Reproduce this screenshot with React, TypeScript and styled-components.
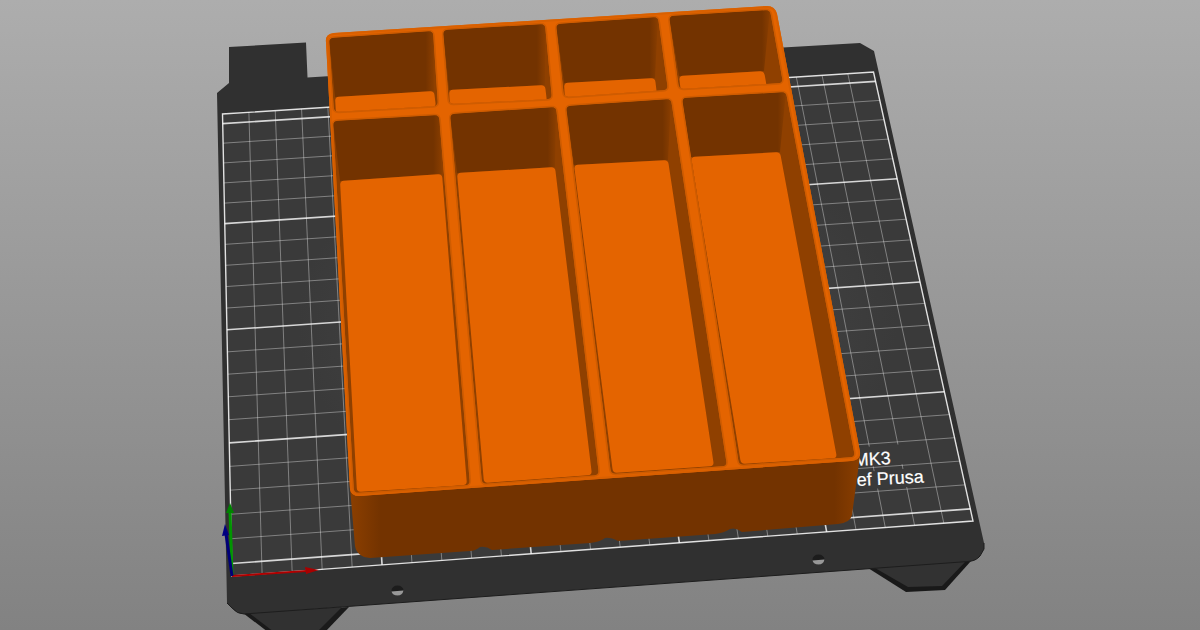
import React from 'react';
import styled, { createGlobalStyle } from 'styled-components';

const GlobalStyle = createGlobalStyle`
  body {
    margin: 0;
    background: #979797;
  }
`;

const Viewport = styled.main`
  width: 100%;
  height: 100vh;
  overflow: hidden;
  background: linear-gradient(180deg, #adadad 0%, #828282 100%);
`;

const Scene = styled.svg`
  display: block;
  width: 100%;
  height: 100%;
`;

const GridLine = styled.line<{ $major?: boolean }>`
  stroke: #ffffff;
  stroke-width: ${({ $major }) => ($major ? 1.6 : 1)};
  stroke-opacity: ${({ $major }) => ($major ? 0.8 : 0.36)};
`;

const BedLabel = styled.text`
  font-family: 'Liberation Sans', Arial, sans-serif;
  font-size: 18px;
  fill: #ffffff;
  stroke: #ffffff;
  stroke-width: 0.2px;
`;

type Point = [number, number];

const pts = (list: Point[]) => list.map((p) => p.join(',')).join(' ');

/* Path of a closed polygon whose corners are rounded by the given radius. */
const rounded = (list: Point[], radius: number) => {
  const n = list.length;
  const toward = (a: Point, b: Point): Point => {
    const d = Math.hypot(b[0] - a[0], b[1] - a[1]);
    const t = Math.min(radius / d, 0.5);
    return [a[0] + (b[0] - a[0]) * t, a[1] + (b[1] - a[1]) * t];
  };
  return (
    list
      .map((p, i) => {
        const start = toward(p, list[(i + n - 1) % n]);
        const end = toward(p, list[(i + 1) % n]);
        return `${i ? 'L' : 'M'}${start.join(' ')}Q${p.join(' ')} ${end.join(' ')}`;
      })
      .join('') + 'Z'
  );
};

/* Print sheet, 250 x 210 mm: front-left, front-right, back-right, back-left. */
const sheet: Point[] = [[232, 576], [973, 521], [873.5, 72], [222.5, 114]];

const project = (() => {
  const [[x0, y0], [x1, y1], [x2, y2], [x3, y3]] = sheet;
  const dx1 = x1 - x2, dx2 = x3 - x2, sx = x0 - x1 + x2 - x3;
  const dy1 = y1 - y2, dy2 = y3 - y2, sy = y0 - y1 + y2 - y3;
  const det = dx1 * dy2 - dx2 * dy1;
  const g = (sx * dy2 - dx2 * sy) / det;
  const h = (dx1 * sy - sx * dy1) / det;
  return (mmX: number, mmY: number): Point => {
    const u = mmX / 250;
    const v = mmY / 210;
    const w = g * u + h * v + 1;
    return [
      ((x1 - x0 + g * x1) * u + (x3 - x0 + h * x3) * v + x0) / w,
      ((y1 - y0 + g * y1) * u + (y3 - y0 + h * y3) * v + y0) / w,
    ];
  };
})();

const columns = Array.from({ length: 24 }, (_, i) => (i + 1) * 10);
const rows = Array.from({ length: 21 }, (_, i) => 5 + i * 10);

const Line = ({ from, to, major }: { from: Point; to: Point; major?: boolean }) => (
  <GridLine x1={from[0]} y1={from[1]} x2={to[0]} y2={to[1]} $major={major} />
);

const Bed = () => (
  <g>
    <polygon points="243,613 268,632 325,632 349,607" fill="#1a1a1a" />
    <polygon points="249,613 274,632 317,632 342,607" fill="#313131" />
    <polygon points="868,568 906,592 945,590 971,561" fill="#191919" />
    <polygon points="875,568 908,587 942,586 966,561" fill="#323232" />
    <path
      d="M229 47 306 42.500 307.500 77.500 783 47.500 860 43 874 51 984 543 984 549 980 556Q976 561 968 561.500L244 614Q237 614 232 608L227 603 217 93 229 83Z"
      fill="#303030"
    />
    <path
      d="M984 543 984 549 980 556Q976 561 968 561.500L244 614Q237 614 232 608L227 603"
      fill="none"
      stroke="#1d1d1d"
      strokeWidth="1"
    />
    <polygon points={pts(sheet)} fill="url(#sheetFill)" />
    {columns.map((x) => (
      <Line key={x} from={project(x, 0)} to={project(x, 210)} major={x % 50 === 0} />
    ))}
    {rows.map((y) => (
      <Line key={y} from={project(0, y)} to={project(250, y)} major={y % 50 === 5} />
    ))}
    <polygon points={pts(sheet)} fill="none" stroke="#ffffff" strokeOpacity="0.85" strokeWidth="1.400" />
    <polygon points="850,448 905,444 905,464 850,468" fill="#3a3a3a" />
    <polygon points="850,473 915,468 926,486 850,490" fill="#3a3a3a" />
    <BedLabel transform="translate(854 466) rotate(-3)">MK3</BedLabel>
    <BedLabel transform="translate(857 486) rotate(-3)">ef Prusa</BedLabel>
    {([[397.5, 590.5], [818.5, 559.5]] as Point[]).map(([x, y]) => (
      <g key={x}>
        <ellipse cx={x} cy={y} rx="6" ry="5" fill="#1c1c1c" />
        <path d={`M${x - 6} ${y + 1}L${x + 6} ${y}Q${x + 5} ${y + 5} ${x} ${y + 5}Q${x - 5} ${y + 5} ${x - 6} ${y + 1}Z`} fill="#989898" />
      </g>
    ))}
  </g>
);

interface Compartment {
  id: string;
  opening: Point[];
  floor: Point[];
}

/* Corners run back-left, back-right, front-right, front-left. */
const compartments: Compartment[] = [
  { id: 'a1', opening: [[329, 38], [433, 31], [438, 106], [334, 112]], floor: [[335, 97], [434, 91], [436, 107], [336, 114]] },
  { id: 'a2', opening: [[443, 30], [545, 24], [552, 99], [449, 104]], floor: [[449, 90], [545, 85], [547, 102], [450, 108]] },
  { id: 'a3', opening: [[556, 24], [658, 17], [668, 90], [564, 97]], floor: [[564, 83], [655, 78], [657, 95], [565, 100]] },
  { id: 'a4', opening: [[669, 16], [770, 10], [783, 83], [679, 89]], floor: [[679, 76], [764, 71], [767, 88], [681, 93]] },
  { id: 'b1', opening: [[333, 121], [439, 115], [470, 485], [354, 493]], floor: [[340, 181], [442, 174], [467, 485], [357, 492]] },
  { id: 'b2', opening: [[450, 114], [556, 107], [599, 475], [482, 484]], floor: [[457, 173], [555, 167], [592, 475], [484, 483]] },
  { id: 'b3', opening: [[566, 106], [671, 99], [727, 466], [611, 474]], floor: [[574, 165], [668, 160], [714, 466], [613, 473]] },
  { id: 'b4', opening: [[682, 98], [786, 92], [855, 457], [739, 465]], floor: [[691, 157], [780, 152], [837, 458], [741, 464]] },
];

const Pocket = ({ id, opening, floor }: Compartment) => (
  <g>
    <path d={rounded(opening, 5)} fill="none" stroke="#cf5c00" strokeWidth="3" />
    <clipPath id={`clip-${id}`}>
      <path d={rounded(opening, 5)} />
    </clipPath>
    <g clipPath={`url(#clip-${id})`}>
      <polygon points={pts(opening)} fill="#8f4000" />
      <polygon points={pts([opening[0], opening[1], floor[1], floor[0]])} fill="url(#backWall)" />
      <path d={rounded(floor, 4)} fill="#e46400" />
    </g>
  </g>
);

const Tray = () => (
  <g>
    <path
      d="M350 488 355 546Q357 557 370 558L470 551Q475 551 480 547 486 546 492 550L590 543Q600 542 605 538 610 537 618 541L715 534Q724 533 730 529 736 527 742 532L838 524Q850 523 852 515L860 456 840 450 360 480Z"
      fill="url(#frontWall)"
    />
    <path
      d="M326 42Q325 34 334 33L767 6Q775 6 777 14L860 452Q861 460 851 461L359 496Q351 496 350 489Z"
      fill="#e46400"
    />
    <path
      d="M327 42Q326 35 334 34L767 7Q774 7 776 14L859 452Q860 459 851 460L359 495Q352 495 351 489Z"
      fill="none"
      stroke="#d96000"
      strokeWidth="2"
    />
    {compartments.map((c) => (
      <Pocket key={c.id} {...c} />
    ))}
  </g>
);

const Axes = () => (
  <g>
    <line x1="232" y1="576" x2="306" y2="571" stroke="#b00000" strokeWidth="2" />
    <polygon points="305,567 319,570 306,574" fill="#a80000" />
    <line x1="232" y1="575" x2="230" y2="511" stroke="#009600" strokeWidth="3" />
    <polygon points="226,513 230,503 234,513" fill="#008200" />
    <line x1="232" y1="576" x2="226" y2="534" stroke="#000078" strokeWidth="3" />
    <polygon points="222,536 225,524 229,535" fill="#000080" />
  </g>
);

export default function App() {
  return (
    <>
      <GlobalStyle />
      <Viewport>
        <Scene viewBox="0 0 1200 630" preserveAspectRatio="xMidYMid slice" role="img" aria-label="Tray on print bed">
          <defs>
            <radialGradient id="sheetFill">
              <stop offset="0" stopColor="#4c4c4c" />
              <stop offset="0.8" stopColor="#3a3a3a" />
            </radialGradient>
            <linearGradient id="backWall">
              <stop offset="0" stopColor="#733300" />
              <stop offset="0.92" stopColor="#733300" />
              <stop offset="1" stopColor="#8a3e00" />
            </linearGradient>
            <linearGradient id="frontWall">
              <stop offset="0" stopColor="#8c3f00" />
              <stop offset="0.06" stopColor="#733300" />
              <stop offset="0.95" stopColor="#733300" />
              <stop offset="1" stopColor="#8a3e00" />
            </linearGradient>
          </defs>
          <Bed />
          <Tray />
          <Axes />
        </Scene>
      </Viewport>
    </>
  );
}
